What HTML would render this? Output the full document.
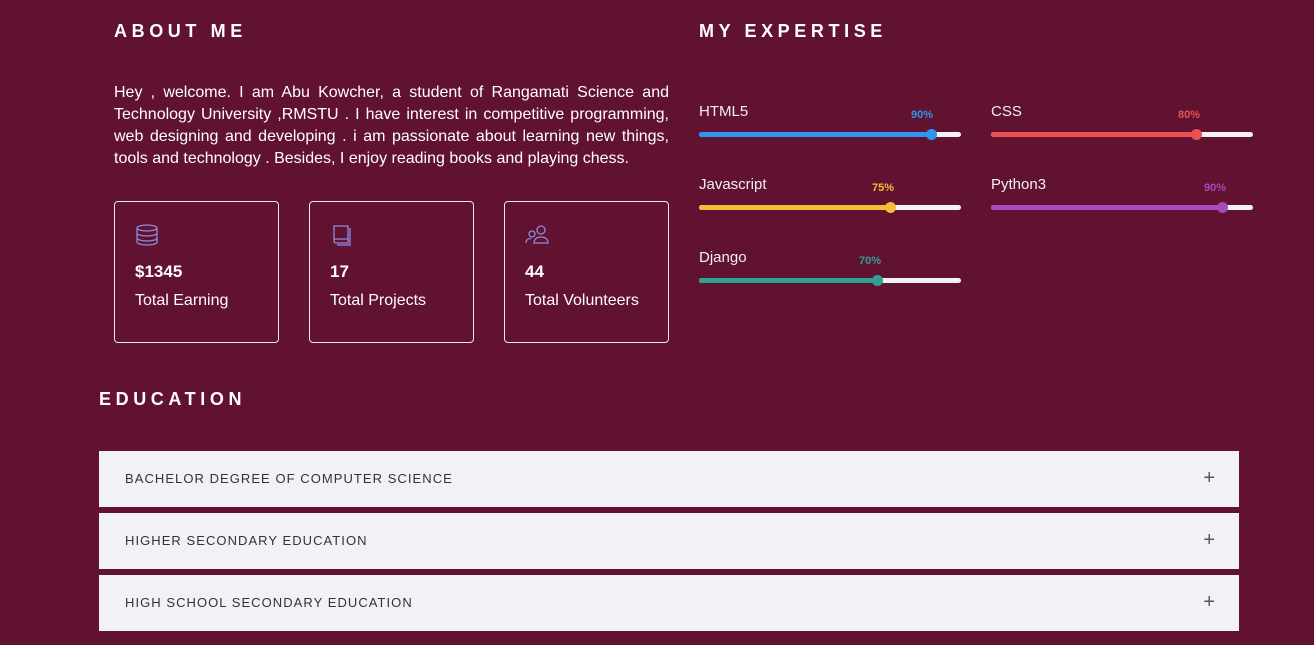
<!DOCTYPE html>
<html><head><meta charset="utf-8"><style>
body{margin:0;width:1314px;height:645px;background:#611230;font-family:"Liberation Sans",sans-serif;color:#fff;position:relative;overflow:hidden}
.h{position:absolute;font-weight:bold;font-size:18px;letter-spacing:4.6px}
p.t{position:absolute;left:114px;top:82px;width:555px;margin:0;font-size:16px;line-height:22px;text-align:justify}
.card{position:absolute;top:201px;width:165px;height:142px;border:1px solid #e8e8ee;border-radius:4px;box-sizing:border-box}
.card svg{position:absolute;left:20px;top:21px}
.card .n{position:absolute;left:20px;top:60px;font-size:17px;font-weight:bold}
.card .l{position:absolute;left:20px;top:90px;font-size:16px}
.sk{position:absolute;width:262px}
.sk .nm{position:absolute;left:0;top:0;font-size:15px;color:#f3eef0}
.sk .tr{position:absolute;left:0;top:29px;width:262px;height:5px;border-radius:3px;background:#f2f2f5}
.sk .f{position:absolute;left:0;top:0;height:5px;border-radius:3px}
.sk .d{position:absolute;top:-3px;width:11px;height:11px;border-radius:50%;margin-left:-5px}
.sk .p{position:absolute;top:6px;font-size:11px;font-weight:bold;transform:translateX(-50%)}
.acc{position:absolute;left:99px;width:1140px;height:56px;background:#f1f2f6;color:#333;font-size:13px;letter-spacing:1.05px;line-height:56px;padding-left:26px;box-sizing:border-box}
.acc span{position:absolute;right:24px;top:-1px;font-size:20px;font-weight:300;color:#555;letter-spacing:0}
</style></head><body>
<div class="h" style="left:114px;top:21px">ABOUT ME</div>
<div class="h" style="left:699px;top:21px">MY EXPERTISE</div>
<div class="h" style="left:99px;top:389px">EDUCATION</div>
<p class="t">Hey , welcome. I am Abu Kowcher, a student of Rangamati Science and Technology University ,RMSTU . I have interest in competitive programming, web designing and developing . i am passionate about learning new things, tools and technology . Besides, I enjoy reading books and playing chess.</p>
<div class="card" style="left:114px"><svg width="24" height="24" viewBox="0 0 24 24" fill="none" stroke="#8a8ce0" stroke-width="1.3"><ellipse cx="12" cy="5" rx="10" ry="3"/><path d="M2 5v14c0 1.7 4.5 3 10 3s10-1.3 10-3V5M2 10c0 1.7 4.5 3 10 3s10-1.3 10-3M2 15c0 1.7 4.5 3 10 3s10-1.3 10-3"/></svg><div class="n">$1345</div><div class="l">Total Earning</div></div>
<div class="card" style="left:309px"><svg width="24" height="24" viewBox="0 0 24 24" fill="none" stroke="#8a8ce0" stroke-width="1.3"><path d="M4 3h14v17H6a2 2 0 0 1-2-2z M4 18a2 2 0 0 1 2-2h12 M20 5v17H7"/></svg><div class="n">17</div><div class="l">Total Projects</div></div>
<div class="card" style="left:504px"><svg width="26" height="24" viewBox="0 0 26 24" fill="none" stroke="#8a8ce0" stroke-width="1.3"><circle cx="16" cy="7" r="4"/><path d="M9 20c0-4 3-6 7-6s7 2 7 6z"/><circle cx="7" cy="11" r="3"/><path d="M1 20c0-3 2-4.5 5-4.5"/></svg><div class="n">44</div><div class="l">Total Volunteers</div></div>

<div class="sk" style="left:699px;top:103px"><div class="nm">HTML5</div><div class="p" style="left:223px;color:#2f96ee">90%</div><div class="tr"><div class="f" style="width:232px;background:#2f96ee"></div><div class="d" style="left:232px;background:#2f96ee"></div></div></div>
<div class="sk" style="left:991px;top:103px"><div class="nm">CSS</div><div class="p" style="left:198px;color:#e85252">80%</div><div class="tr"><div class="f" style="width:205px;background:#e85252"></div><div class="d" style="left:205px;background:#e85252"></div></div></div>
<div class="sk" style="left:699px;top:176px"><div class="nm">Javascript</div><div class="p" style="left:184px;color:#f8bb35">75%</div><div class="tr"><div class="f" style="width:191px;background:#f8bb35"></div><div class="d" style="left:191px;background:#f8bb35"></div></div></div>
<div class="sk" style="left:991px;top:176px"><div class="nm">Python3</div><div class="p" style="left:224px;color:#a54cb8">90%</div><div class="tr"><div class="f" style="width:231px;background:#a54cb8"></div><div class="d" style="left:231px;background:#a54cb8"></div></div></div>
<div class="sk" style="left:699px;top:249px"><div class="nm">Django</div><div class="p" style="left:171px;color:#2da192">70%</div><div class="tr"><div class="f" style="width:178px;background:#2da192"></div><div class="d" style="left:178px;background:#2da192"></div></div></div>

<div class="acc" style="top:451px">BACHELOR DEGREE OF COMPUTER SCIENCE<span>+</span></div>
<div class="acc" style="top:513px">HIGHER SECONDARY EDUCATION<span>+</span></div>
<div class="acc" style="top:575px">HIGH SCHOOL SECONDARY EDUCATION<span>+</span></div>
</body></html>
